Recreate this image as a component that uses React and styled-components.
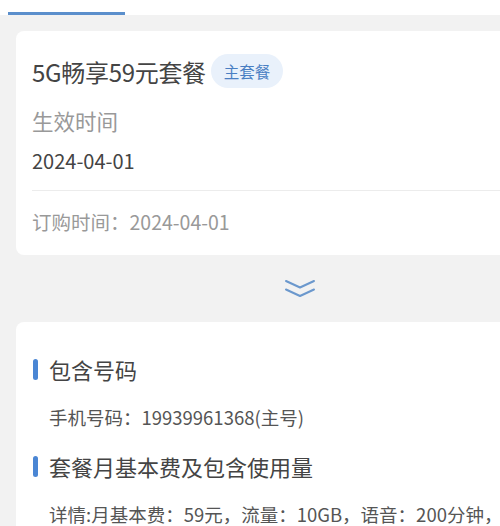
import styled, { createGlobalStyle } from 'styled-components'

const Global = createGlobalStyle`
    html, body {
        margin: 0;
        padding: 0;
        background: #f2f2f2;
        overflow: hidden;
    }
    body {
        font-family: "Noto Sans CJK SC", "Noto Sans", sans-serif;
    }
`;

const App = () => {
    return (
        <Page>
            <Global />
            <TabBar>
                <TabLine />
            </TabBar>
            <Card>
                <TitleRow>
                    <Title>5G畅享59元套餐</Title>
                    <Tag>主套餐</Tag>
                </TitleRow>
                <Label>生效时间</Label>
                <Value>2024-04-01</Value>
                <Divider />
                <Footer>订购时间：2024-04-01</Footer>
            </Card>
            <ExpandRow>
                <svg width="32" height="20" viewBox="0 0 32 20" fill="none"
                    stroke="#6b98cd" strokeWidth="2" strokeLinecap="round" strokeLinejoin="round">
                    <path d="M2 2 L16 8.5 L30 2" />
                    <path d="M2 10.5 L16 17 L30 10.5" />
                </svg>
            </ExpandRow>
            <DetailCard>
                <SectionTitle>包含号码</SectionTitle>
                <Line $gap={19}>手机号码：19939961368(主号)</Line>
                <SectionTitle $gap={20}>套餐月基本费及包含使用量</SectionTitle>
                <Line $gap={19}>详情:月基本费：59元，流量：10GB，语音：200分钟，</Line>
            </DetailCard>
        </Page>
    )
}

const Page = styled.div`
    width: 600px;
    min-height: 526px;
    background: #f2f2f2;
    display: flex;
    flex-direction: column;
`;

const TabBar = styled.div`
    height: 15px;
    background: #fff;
    display: flex;
    align-items: flex-end;
    padding-left: 8px;
`;

const TabLine = styled.div`
    width: 117px;
    height: 3px;
    background: #5b8fcc;
`;

const Card = styled.div`
    margin: 16px 16px 0;
    background: #fff;
    border-radius: 8px;
    padding: 22px 0 18px 16px;
    display: flex;
    flex-direction: column;
`;

const TitleRow = styled.div`
    display: flex;
    align-items: center;
    gap: 5px;
    height: 36px;
`;

const Title = styled.span`
    font-size: 24px;
    color: #444;
    letter-spacing: -0.3px;
`;

const Tag = styled.span`
    height: 34px;
    padding: 0 13px;
    border-radius: 17px;
    background: #e9f1fb;
    color: #4a7fc3;
    font-size: 15.5px;
    display: flex;
    align-items: center;
`;

const Label = styled.div`
    margin-top: 17px;
    font-size: 21.5px;
    line-height: 30px;
    color: #999;
`;

const Value = styled.div`
    margin-top: 10px;
    font-size: 20px;
    line-height: 30px;
    color: #444;
`;

const Divider = styled.div`
    margin-top: 14px;
    height: 1px;
    background: #ececec;
`;

const Footer = styled.div`
    margin-top: 16px;
    font-size: 19.5px;
    line-height: 30px;
    color: #999;
`;

const ExpandRow = styled.div`
    height: 67px;
    display: flex;
    align-items: center;
    justify-content: center;
`;

const DetailCard = styled.div`
    margin: 0 16px;
    background: #fff;
    border-radius: 8px;
    padding: 32px 0 20px 16px;
    display: flex;
    flex-direction: column;
`;

const SectionTitle = styled.div`
    margin-top: ${p => p.$gap || 0}px;
    display: flex;
    align-items: center;
    gap: 11px;
    font-size: 22px;
    line-height: 30px;
    color: #444;

    &::before {
        content: '';
        width: 5px;
        height: 21px;
        border-radius: 3px;
        background: #4a86d4;
        margin-left: 1px;
    }
`;

const Line = styled.div`
    margin-top: ${p => p.$gap || 17}px;
    padding-left: 17px;
    font-size: 18.5px;
    line-height: 28px;
    color: #555;
    white-space: nowrap;
`;

export default App;
